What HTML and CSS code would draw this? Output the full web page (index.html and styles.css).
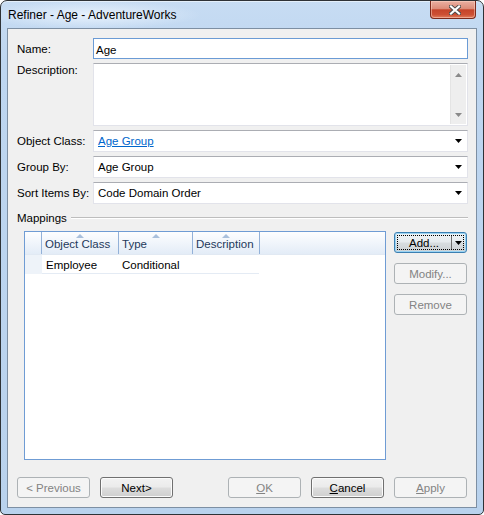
FILE: index.html
```html
<!DOCTYPE html>
<html lang="en">

<head>
  <meta charset="UTF-8">
  <title>Refiner - Age - AdventureWorks</title>
  <link rel="stylesheet" href="styles.css">
</head>

<body>
  <div class="window">
    <div class="titlebar">
      <span class="title">Refiner - Age - AdventureWorks</span>
      <div class="close-btn">
        <svg width="12" height="10" viewBox="0 0 12 10">
          <path d="M2 1.5L10 8.5M10 1.5L2 8.5" stroke="#4a4a4a" stroke-width="4" stroke-linecap="square" />
          <path d="M2 1.5L10 8.5M10 1.5L2 8.5" stroke="#fff" stroke-width="2.2" stroke-linecap="square" />
        </svg>
      </div>
    </div>

    <div class="client">
      <div class="form">
        <label>Name:</label>
        <div class="textbox focused">Age</div>

        <label class="top">Description:</label>
        <div class="textarea">
          <div class="text"></div>
          <div class="vscroll">
            <svg width="7" height="4" viewBox="0 0 7 4"><path d="M3.5 0L7 4H0z" fill="#8a8a8a" /></svg>
            <svg width="7" height="4" viewBox="0 0 7 4"><path d="M0 0h7L3.5 4z" fill="#8a8a8a" /></svg>
          </div>
        </div>

        <label>Object Class:</label>
        <div class="combo">
          <span class="value link">Age Group</span>
          <svg class="drop" width="7" height="4" viewBox="0 0 7 4"><path d="M0 0h7L3.5 4z" /></svg>
        </div>

        <label>Group By:</label>
        <div class="combo">
          <span class="value">Age Group</span>
          <svg class="drop" width="7" height="4" viewBox="0 0 7 4"><path d="M0 0h7L3.5 4z" /></svg>
        </div>

        <label>Sort Items By:</label>
        <div class="combo">
          <span class="value">Code Domain Order</span>
          <svg class="drop" width="7" height="4" viewBox="0 0 7 4"><path d="M0 0h7L3.5 4z" /></svg>
        </div>
      </div>

      <div class="group-title">
        <span>Mappings</span>
        <div class="rule"></div>
      </div>

      <div class="mappings">
        <div class="listview">
          <div class="lv-header">
            <div class="lv-col c0"></div>
            <div class="lv-col c1">Object Class<i class="sort"></i></div>
            <div class="lv-col c2">Type<i class="sort"></i></div>
            <div class="lv-col c3">Description<i class="sort"></i></div>
          </div>
          <div class="lv-row">
            <div class="lv-cell c0"></div>
            <div class="lv-cell c1">Employee</div>
            <div class="lv-cell c2">Conditional</div>
            <div class="lv-cell c3"></div>
          </div>
        </div>

        <div class="side-buttons">
          <div class="btn default split">
            <span class="label">Add...</span>
            <span class="sep"></span>
            <svg class="drop" width="7" height="4" viewBox="0 0 7 4"><path d="M0 0h7L3.5 4z" /></svg>
          </div>
          <div class="btn disabled">Modify...</div>
          <div class="btn disabled">Remove</div>
        </div>
      </div>

      <div class="footer">
        <div class="btn-group">
          <div class="btn disabled">&lt; Previous</div>
          <div class="btn">Next&gt;</div>
        </div>
        <div class="btn-group">
          <div class="btn disabled"><u>O</u>K</div>
          <div class="btn"><u>C</u>ancel</div>
          <div class="btn disabled"><u>A</u>pply</div>
        </div>
      </div>
    </div>
  </div>
</body>

</html>
```

FILE: styles.css
```css
* {
  box-sizing: border-box;
}

html,
body {
  margin: 0;
  width: 484px;
  height: 515px;
  overflow: hidden;
  background: #fff;
  font-family: 'Liberation Sans', Arial, sans-serif;
  font-size: 12px;
  color: #000;
}

.window {
  width: 484px;
  height: 515px;
  border: 1px solid #2e3236;
  border-radius: 7px 7px 5px 5px;
  background: linear-gradient(#c7dcf3, #bed6f0 60px, #b9d2ed);
  box-shadow: inset 0 1px 0 #e4effa;
  display: flex;
  flex-direction: column;
  overflow: hidden;
}

.titlebar {
  height: 27px;
  display: flex;
  justify-content: space-between;
  padding-left: 7px;
  padding-right: 7px;
  background: radial-gradient(ellipse 110px 14px at 90px 14px, rgba(235, 244, 253, 0.9), rgba(235, 244, 253, 0));
}

.title {
  align-self: center;
  margin-top: 1px;
}

.close-btn {
  width: 46px;
  height: 18px;
  border: 1px solid #7c2a1c;
  border-top: none;
  border-radius: 0 0 4px 4px;
  background: linear-gradient(#eab0a2 0%, #dc8c79 45%, #c5442a 52%, #cd5034 80%, #e17d5e 100%);
  box-shadow: inset 0 0 0 1px rgba(255, 215, 200, 0.5);
  display: flex;
  align-items: center;
  justify-content: center;
  padding-left: 3px;
}

.client {
  flex: 1;
  margin: 0 6px 6px;
  border: 1px solid #7d8fa3;
  background: #f0f0f0;
  display: flex;
  flex-direction: column;
  padding: 9px 8px 9px 9px;
  font-size: 11.5px;
}

/* top fields */
.form {
  display: grid;
  grid-template-columns: 76px 1fr;
  grid-template-rows: 21px 63px 22px 22px 22px;
  row-gap: 4px;
}

.form label {
  align-self: center;
}

.form label.top {
  align-self: start;
  padding-top: 1px;
}

.textbox {
  background: #fff;
  border: 1px solid #e2e3ea;
  border-top-color: #abadb3;
  padding: 2px 2px 0;
  display: flex;
  align-items: center;
}

.textbox.focused {
  border-color: #6b9bd5;
}

.textarea {
  background: #fff;
  border: 1px solid #e2e3ea;
  border-top-color: #abadb3;
  display: flex;
  padding: 1px 1px 1px 0;
}

.textarea .text {
  flex: 1;
}

.vscroll {
  width: 16px;
  background: #eeeeee;
  border-left: 1px solid #e4e4e4;
  display: flex;
  flex-direction: column;
  justify-content: space-between;
  align-items: center;
  padding: 8px 0 7px;
}

.combo {
  background: #fff;
  border: 1px solid #e2e3ea;
  border-top-color: #abadb3;
  display: flex;
  align-items: center;
  padding: 0 5px 0 4px;
}

.combo .value {
  flex: 1;
}

.link {
  color: #0066cc;
  text-decoration: underline;
}

/* mappings */
.group-title {
  margin-top: 6px;
  height: 15px;
  display: flex;
  align-items: center;
}

.group-title .rule {
  flex: 1;
  margin-left: 4px;
  margin-top: 1px;
  border-top: 1px solid #bdbdbd;
  border-bottom: 1px solid #fff;
}

.mappings {
  flex: 1;
  margin-top: 6px;
  padding-left: 7px;
  display: flex;
  gap: 8px;
}

.listview {
  flex: 1;
  background: #fff;
  border: 1px solid #6f9cd4;
}

.lv-header {
  height: 23px;
  display: flex;
  background: linear-gradient(#fdfeff, #f0f5fb 50%, #e3ecf7);
  border-bottom: 1px solid #e1e9f3;
}

.lv-col {
  position: relative;
  border-right: 1px solid #93b1d8;
  color: #1e395b;
  padding-left: 3px;
  display: flex;
  align-items: center;
  padding-top: 1px;
}

.lv-col .sort {
  position: absolute;
  top: 2px;
  left: 50%;
  margin-left: -4px;
  width: 0;
  height: 0;
  border-left: 4px solid transparent;
  border-right: 4px solid transparent;
  border-bottom: 4px solid #a9c0dc;
}

.c0 {
  width: 17px;
}

.c1 {
  width: 77px;
}

.c2 {
  width: 74px;
}

.c3 {
  width: 67px;
}

.lv-col.c0 {
  padding-left: 0;
}

.lv-row {
  height: 19px;
  display: flex;
}

.lv-cell {
  display: flex;
  align-items: center;
  padding-left: 3px;
  padding-top: 1px;
  border-bottom: 1px solid #e4ebf4;
}

.lv-cell.c1 {
  padding-left: 4px;
}

.lv-cell.c0 {
  background: #eef3f9;
  border-bottom: none;
}

.lv-cell.c3 {
  width: 66px;
}

.side-buttons {
  width: 73px;
  margin-right: 1px;
  padding-top: 1px;
  display: flex;
  flex-direction: column;
  gap: 10px;
}

/* buttons */
.btn {
  width: 73px;
  height: 21px;
  border: 1px solid #707070;
  border-radius: 3px;
  background: linear-gradient(#f2f2f2 0%, #ebebeb 48%, #dddddd 52%, #cfcfcf 100%);
  box-shadow: inset 0 0 0 1px #fbfbfb;
  display: flex;
  align-items: center;
  justify-content: center;
  color: #000;
}

.btn u {
  text-decoration: underline;
}

.btn.disabled {
  background: #f4f4f4;
  border-color: #adb2b5;
  box-shadow: none;
  color: #838383;
}

.btn.default {
  border-color: #3c7fb1;
  box-shadow: inset 0 0 0 1px #9ad4f4;
  outline: 1px dotted #000;
  outline-offset: -4px;
  background: linear-gradient(#eef3f5 0%, #e6ebee 48%, #d8dde0 52%, #ccd1d4 100%);
}

.btn.split {
  justify-content: flex-start;
  padding-right: 4px;
}

.btn.split .label {
  flex: 1;
  text-align: center;
  padding-left: 2px;
}

.btn.split .sep {
  width: 1px;
  height: 15px;
  background: #6f6f6f;
  margin-right: 3px;
}

.footer {
  margin-top: 17px;
  padding-right: 1px;
  display: flex;
  justify-content: space-between;
}

.btn-group {
  display: flex;
  gap: 10px;
}
```
